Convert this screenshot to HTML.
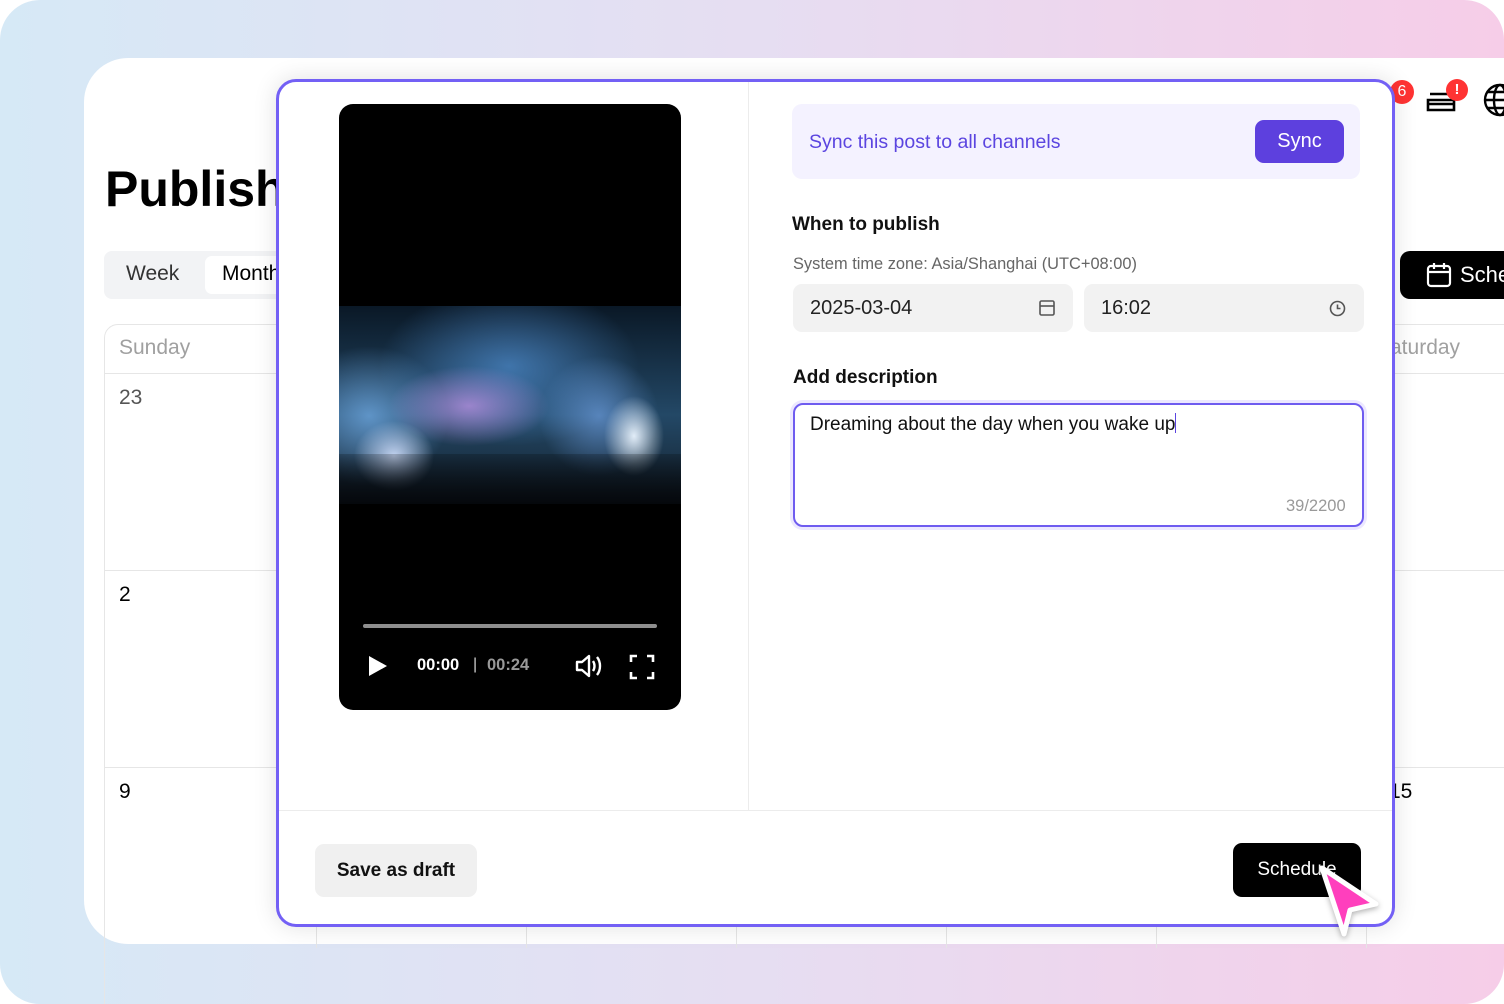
<!DOCTYPE html>
<html><head><style>
*{margin:0;padding:0;box-sizing:border-box}
html,body{width:1504px;height:1004px;overflow:hidden;background:#fff}
body{font-family:"Liberation Sans",sans-serif;position:relative}
.abs{position:absolute}
.bg{left:0;top:0;width:1504px;height:1004px;border-radius:40px;background:linear-gradient(90deg,#d6e9f6 0%,#e6def2 50%,#f6cde8 100%);overflow:hidden}
.panel{left:84px;top:58px;width:1460px;height:886px;background:#fff;border-radius:44px 0 0 44px}
.vl{position:absolute;width:1px;background:#e6e6e6}
.hl{position:absolute;height:1px;background:#e6e6e6}
.modal{left:276px;top:79px;width:1119px;height:848px;background:#fff;border:3px solid #7360f5;border-radius:20px;box-shadow:0 0 24px rgba(0,0,0,.12);overflow:hidden}
</style></head><body>
<div class="abs bg"></div>
<div class="abs panel">
  <div class="abs" style="left:21px;top:102px;font-size:50px;font-weight:bold;color:#000">Publish</div>
  <div class="abs" style="left:20px;top:193px;width:250px;height:48px;background:#f2f3f5;border-radius:8px"></div>
  <div class="abs" style="left:42px;top:204px;font-size:21px;color:#333">Week</div>
  <div class="abs" style="left:121px;top:198px;width:140px;height:38px;background:#fff;border-radius:7px"></div>
  <div class="abs" style="left:138px;top:204px;font-size:21px;color:#000">Month</div>
  <div class="abs" style="left:20px;top:266px;width:1500px;height:700px;border:1px solid #e6e6e6;border-radius:14px 0 0 0"></div>
  <div class="hl" style="left:20px;top:315px;width:1440px"></div>
  <div class="hl" style="left:20px;top:512px;width:1440px"></div>
  <div class="hl" style="left:20px;top:709px;width:1440px"></div>
  <div class="vl" style="left:232px;top:860px;height:30px"></div>
  <div class="vl" style="left:442px;top:860px;height:30px"></div>
  <div class="vl" style="left:652px;top:860px;height:30px"></div>
  <div class="vl" style="left:862px;top:860px;height:30px"></div>
  <div class="vl" style="left:1072px;top:860px;height:30px"></div>
  <div class="vl" style="left:1282px;top:860px;height:30px"></div>
  <div class="abs" style="left:35px;top:278px;font-size:21px;color:#a0a0a0">Sunday</div>
  <div class="abs" style="left:1292px;top:278px;font-size:21px;color:#a0a0a0">Saturday</div>
  <div class="abs" style="left:35px;top:328px;font-size:21px;color:#555">23</div>
  <div class="abs" style="left:35px;top:525px;font-size:21px;color:#000">2</div>
  <div class="abs" style="left:35px;top:722px;font-size:21px;color:#000">9</div>
  <div class="abs" style="left:1305px;top:722px;font-size:21px;color:#000">15</div>
  <div class="abs" style="left:1316px;top:193px;width:200px;height:48px;background:#000;border-radius:10px"></div>
  <svg class="abs" style="left:1342px;top:203px" width="26" height="28" viewBox="0 0 26 28" fill="none" stroke="#fff" stroke-width="2.2"><rect x="2" y="5" width="22" height="20" rx="3"/><path d="M2 11h22M8 2v6M18 2v6"/></svg>
  <div class="abs" style="left:1376px;top:204px;font-size:22px;color:#fff">Schedule</div>
  <svg class="abs" style="left:1340px;top:26px" width="34" height="32" viewBox="0 0 34 32" fill="none" stroke="#000" stroke-width="2.6"><path d="M6 10h20M4 16h26v10H4z"/><path d="M4 20h26"/></svg>
  <div class="abs" style="left:1362px;top:21px;width:22px;height:22px;border-radius:50%;background:#f33;color:#fff;font-size:15px;font-weight:bold;text-align:center;line-height:22px">!</div>
  <svg class="abs" style="left:1398px;top:24px" width="40" height="36" viewBox="0 0 40 36" fill="none" stroke="#000" stroke-width="2.4"><circle cx="18" cy="18" r="15"/><ellipse cx="18" cy="18" rx="6" ry="15"/><path d="M3 18h30M5 10h26M5 26h26"/></svg>
</div>
<div class="abs" style="left:1390px;top:80px;width:24px;height:24px;border-radius:50%;background:#f33;color:#fff;font-size:16px;text-align:center;line-height:24px">6</div>
<div class="abs modal">
  <div class="vl" style="left:469px;top:0;height:728px;background:#ececec"></div>
  <div class="hl" style="left:0;top:728px;width:1119px;background:#ececec"></div>
  <div class="abs" style="left:60px;top:22px;width:342px;height:606px;background:#000;border-radius:14px;overflow:hidden">
    <div class="abs" style="left:0;top:202px;width:342px;height:198px;background:
      radial-gradient(ellipse 30px 40px at 295px 130px,rgba(235,245,255,.95),transparent),
      radial-gradient(ellipse 40px 35px at 55px 150px,rgba(210,225,255,.9),transparent),
      radial-gradient(ellipse 80px 40px at 130px 100px,rgba(200,150,235,.7),transparent),
      radial-gradient(ellipse 60px 60px at 260px 110px,rgba(120,170,240,.6),transparent),
      radial-gradient(ellipse 130px 80px at 170px 60px,rgba(90,160,235,.6),transparent),
      radial-gradient(ellipse 80px 70px at 30px 110px,rgba(120,180,240,.7),transparent),
      linear-gradient(180deg,#0a1826 0%,#234866 55%,#14202c 100%)"></div>
    <div class="abs" style="left:0;top:350px;width:342px;height:50px;background:linear-gradient(180deg,rgba(0,0,0,.2),#05080c)"></div>
    <div class="abs" style="left:24px;top:520px;width:294px;height:4px;background:#8e8e8e;border-radius:2px"></div>
    <svg class="abs" style="left:28px;top:550px" width="22" height="24"><path d="M2 2L20 12L2 22Z" fill="#fff"/></svg>
    <div class="abs" style="left:78px;top:552px;font-size:16.5px;font-weight:bold;color:#fff">00:00</div>
    <div class="abs" style="left:134px;top:552px;font-size:16px;color:#ccc">|</div>
    <div class="abs" style="left:148px;top:552px;font-size:16.5px;font-weight:bold;color:#999">00:24</div>
    <svg class="abs" style="left:235px;top:548px" width="30" height="28" viewBox="0 0 30 28" fill="none" stroke="#fff" stroke-width="2.4" stroke-linejoin="round"><path d="M3 10h5l7-6v20l-7-6H3z"/><path d="M19 9c2 3 2 7 0 10M23 5c4 5 4 13 0 18"/></svg>
    <svg class="abs" style="left:290px;top:550px" width="26" height="26" viewBox="0 0 26 26" fill="none" stroke="#fff" stroke-width="2.6"><path d="M2 8V2h6M18 2h6v6M24 18v6h-6M8 24H2v-6"/></svg>
  </div>
  <div class="abs" style="left:513px;top:22px;width:568px;height:75px;background:#f4f2ff;border-radius:10px"></div>
  <div class="abs" style="left:530px;top:49px;font-size:19.5px;color:#5b45e0">Sync this post to all channels</div>
  <div class="abs" style="left:976px;top:38px;width:89px;height:43px;background:#5d40de;border-radius:9px;color:#fff;font-size:20px;text-align:center;line-height:43px">Sync</div>
  <div class="abs" style="left:513px;top:132px;font-size:19px;font-weight:bold;color:#111">When to publish</div>
  <div class="abs" style="left:514px;top:173px;font-size:16.4px;color:#666">System time zone: Asia/Shanghai (UTC+08:00)</div>
  <div class="abs" style="left:514px;top:202px;width:280px;height:48px;background:#f2f2f2;border-radius:9px"></div>
  <div class="abs" style="left:531px;top:215px;font-size:20px;color:#222">2025-03-04</div>
  <svg class="abs" style="left:760px;top:217px" width="16" height="17" viewBox="0 0 16 17" fill="none" stroke="#555" stroke-width="1.6"><rect x="1" y="2" width="14" height="14" rx="1.5"/><path d="M1 7h14"/></svg>
  <div class="abs" style="left:805px;top:202px;width:280px;height:48px;background:#f2f2f2;border-radius:9px"></div>
  <div class="abs" style="left:822px;top:215px;font-size:20px;color:#222">16:02</div>
  <svg class="abs" style="left:1050px;top:218px" width="17" height="17" viewBox="0 0 17 17" fill="none" stroke="#555" stroke-width="1.6"><circle cx="8.5" cy="8.5" r="7"/><path d="M8.5 4.5v4h3"/></svg>
  <div class="abs" style="left:514px;top:285px;font-size:19px;font-weight:bold;color:#111">Add description</div>
  <div class="abs" style="left:514px;top:321px;width:571px;height:124px;border:2px solid #6f5cf0;border-radius:10px;box-shadow:0 0 0 3px #ece8ff"></div>
  <div class="abs" style="left:531px;top:331px;font-size:19px;color:#111">Dreaming about the day when you wake up<span style="display:inline-block;width:1px;height:20px;background:#5b45e0;vertical-align:-3px"></span></div>
  <div class="abs" style="left:1007px;top:415px;font-size:16.5px;color:#999">39/2200</div>
  <div class="abs" style="left:36px;top:762px;width:162px;height:53px;background:#f0f0f0;border-radius:9px;font-size:19px;font-weight:bold;color:#111;text-align:center;line-height:53px">Save as draft</div>
  <div class="abs" style="left:954px;top:761px;width:128px;height:54px;background:#000;border-radius:9px;font-size:19px;color:#fff;text-align:center;line-height:54px">Schedule</div>
</div>
<svg class="abs" style="left:1314px;top:862px" width="70" height="80" viewBox="0 0 70 80"><path d="M8 6L62 42L36 48L30 72Z" fill="#ff3fbd" stroke="#fff" stroke-width="5" stroke-linejoin="round" style="filter:drop-shadow(0 2px 3px rgba(0,0,0,.3))"/></svg>
</body></html>
